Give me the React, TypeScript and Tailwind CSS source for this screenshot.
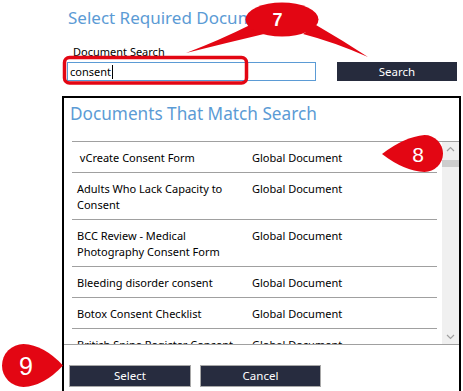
import React from 'react';

type Doc = {
  name: string;
  kind: string;
};

const docs: Doc[] = [
  { name: '\u00a0vCreate Consent Form', kind: 'Global Document' },
  { name: 'Adults Who Lack Capacity to Consent', kind: 'Global Document' },
  { name: 'BCC Review - Medical Photography Consent Form', kind: 'Global Document' },
  { name: 'Bleeding disorder consent', kind: 'Global Document' },
  { name: 'Botox Consent Checklist', kind: 'Global Document' },
  { name: 'British Spine Register Consent', kind: 'Global Document' },
];

function Callouts() {
  return (
    <svg className="pointer-events-none absolute inset-0" width="463" height="391" viewBox="0 0 463 391">
      {/* 7 - speech bubble with two tails */}
      <rect x="64.5" y="57.5" width="182" height="25.5" rx="5" fill="none" stroke="#e30613" strokeWidth="3.5" />
      <path d="M250 25 Q220 40 186 53 Q226 43 264 34 Z" fill="#e30613" />
      <path d="M316 25 Q342 40 368 57 Q334 42 303 34 Z" fill="#e30613" />
      <ellipse cx="282" cy="19.5" rx="36.5" ry="17" fill="#e30613" />
      <text x="277.5" y="26" fill="#fff" fontSize="18" fontWeight="700" textAnchor="middle" fontFamily="Liberation Sans, Arial, sans-serif">7</text>
      {/* 8 */}
      <path d="M382 154 Q404 137 424.5 135 A18.5 18.5 0 1 1 424.5 172 Q404 171 382 154 Z" fill="#e30613" />
      <text x="418" y="161.5" fill="#fff" fontSize="21" textAnchor="middle" fontFamily="Liberation Sans, Arial, sans-serif">8</text>
      {/* 9 */}
      <path d="M63 365.5 Q44 345 23.5 344 A21.5 21.5 0 1 0 23.5 387 Q44 386 63 365.5 Z" fill="#e30613" />
      <text x="26" y="375" fill="#fff" fontSize="25" textAnchor="middle" fontFamily="Liberation Sans, Arial, sans-serif">9</text>
    </svg>
  );
}

export default function App() {
  return (
    <div className="relative h-[391px] w-[463px] overflow-hidden bg-white font-['Noto_Sans',sans-serif] text-black">
      <div className="pl-[68px] pt-[6px] text-[17px] leading-[24px] text-[#5b9bd5]">Select Required Documents</div>
      <div className="mt-[14px] pl-[73px] text-[11px] leading-[16px]">Document Search</div>
      <div className="mt-[2px] flex items-center pl-[67px]">
        <div className="flex h-[19px] w-[249px] items-center border border-[#5b9bd5] pl-[2px] text-[11px] leading-[16px]">
          consent<span className="ml-[1px] h-[14px] w-px bg-black" />
        </div>
        <button className="ml-[21px] h-[19px] w-[120px] bg-[#262b3d] text-[11.5px] leading-[16px] text-white">Search</button>
      </div>

      <div className="ml-[62px] mt-[15px] h-[310px] w-[399px] border-2 border-black">
        <div className="pl-[6px] pt-[4px] text-[17.2px] leading-[24px] text-[#5b9bd5]">Documents That Match Search</div>
        <div className="ml-[8px] mt-[15px] flex h-[203px] border-t border-[#a0a0a0]">
          <div className="w-[370px] overflow-hidden">
            {docs.map((d) => (
              <div key={d.name} className="flex w-[365px] border-b border-[#a0a0a0] pt-[8px] pb-[6px] text-[11px] leading-[16px]">
                <div className="w-[180px] shrink-0 pl-[5px] pr-[4px]">{d.name}</div>
                <div>{d.kind}</div>
              </div>
            ))}
          </div>
          <div className="flex w-[17px] flex-col items-center justify-between bg-[#f0f0f0] py-[4px]">
            <div className="flex flex-col items-center">
              <svg width="9" height="6" viewBox="0 0 9 6"><path d="M1 5 L4.5 1.5 L8 5" fill="none" stroke="#a0a0a0" strokeWidth="1.2" /></svg>
              <div className="mt-[8px] h-[7px] w-[17px] bg-[#cdcdcd]" />
            </div>
            <svg width="9" height="6" viewBox="0 0 9 6"><path d="M1 1 L4.5 4.5 L8 1" fill="none" stroke="#a0a0a0" strokeWidth="1.2" /></svg>
          </div>
        </div>
        <div className="border-t border-[#a0a0a0]" />
        <div className="mt-[20px] flex gap-[9px] pl-[5px]">
          <button className="h-[22px] w-[122px] border border-[#a8a8a8] bg-[#272c3f] text-[11.5px] leading-[16px] text-white">Select</button>
          <button className="h-[22px] w-[121px] border border-[#a8a8a8] bg-[#272c3f] text-[11.5px] leading-[16px] text-white">Cancel</button>
        </div>
      </div>

      <Callouts />
    </div>
  );
}
